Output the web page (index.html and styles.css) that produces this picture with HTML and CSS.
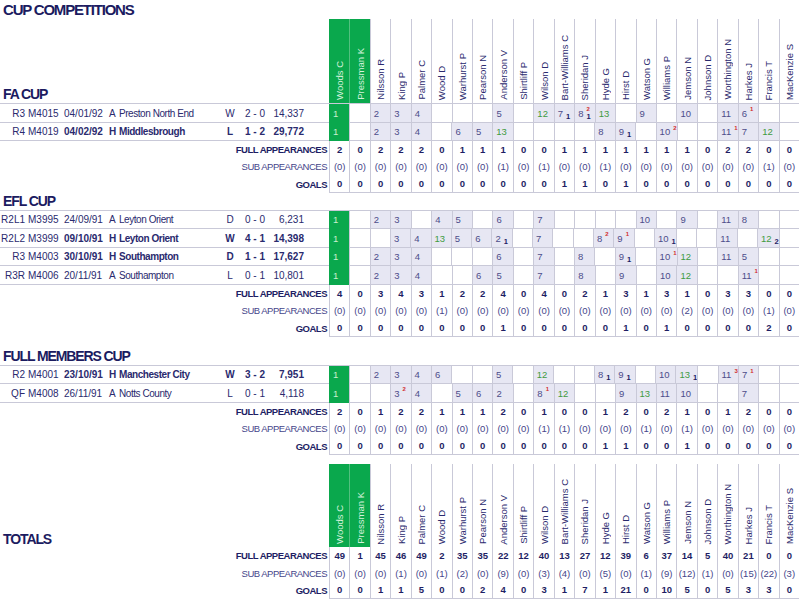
FILE: index.html
```html
<!DOCTYPE html>
<html lang="en">
<head>
<meta charset="utf-8">
<title>Cup Competitions</title>
<link rel="stylesheet" href="styles.css">
</head>
<body>
<main class="page">
  <h1 class="page-title">CUP COMPETITIONS</h1>

  <section class="comp">
    <div class="grid head">
      <h2 class="comp-title">FA CUP</h2>
      <div class="name gk"><span>Woods C</span></div>
      <div class="name gk"><span>Pressman K</span></div>
      <div class="name"><span>Nilsson R</span></div>
      <div class="name"><span>King P</span></div>
      <div class="name"><span>Palmer C</span></div>
      <div class="name"><span>Wood D</span></div>
      <div class="name"><span>Warhurst P</span></div>
      <div class="name"><span>Pearson N</span></div>
      <div class="name"><span>Anderson V</span></div>
      <div class="name"><span>Shirtliff P</span></div>
      <div class="name"><span>Wilson D</span></div>
      <div class="name"><span>Bart-Williams C</span></div>
      <div class="name"><span>Sheridan J</span></div>
      <div class="name"><span>Hyde G</span></div>
      <div class="name"><span>Hirst D</span></div>
      <div class="name"><span>Watson G</span></div>
      <div class="name"><span>Williams P</span></div>
      <div class="name"><span>Jemson N</span></div>
      <div class="name"><span>Johnson D</span></div>
      <div class="name"><span>Worthington N</span></div>
      <div class="name"><span>Harkes J</span></div>
      <div class="name"><span>Francis T</span></div>
      <div class="name"><span>MacKenzie S</span></div>
    </div>
    <div class="matches">
      <div class="grid match">
        <div class="info"><span class="rd">R3</span><span class="code">M4015</span><span class="date">04/01/92</span><span class="ven">A</span><span class="opp">Preston North End</span><span class="res">W</span><span class="score">2 - 0</span><span class="att">14,337</span></div>
        <span class="p gk">1</span><span class="p"></span><span class="p f">2</span><span class="p f">3</span><span class="p f">4</span><span class="p"></span><span class="p"></span><span class="p"></span><span class="p f">5</span><span class="p"></span><span class="p f s">12</span><span class="p f">7<span class="mk"><b class="dn">1</b></span></span><span class="p f">8<span class="mk"><b class="up">2</b><b class="dn">1</b></span></span><span class="p f s">13</span><span class="p"></span><span class="p f">9</span><span class="p"></span><span class="p f">10</span><span class="p"></span><span class="p f">11</span><span class="p f">6<span class="mk"><b class="up">1</b></span></span><span class="p"></span><span class="p"></span>
      </div>
      <div class="grid match home">
        <div class="info"><span class="rd">R4</span><span class="code">M4019</span><span class="date">04/02/92</span><span class="ven">H</span><span class="opp">Middlesbrough</span><span class="res">L</span><span class="score">1 - 2</span><span class="att">29,772</span></div>
        <span class="p gk">1</span><span class="p"></span><span class="p f">2</span><span class="p f">3</span><span class="p f">4</span><span class="p"></span><span class="p f">6</span><span class="p f">5</span><span class="p f s">13</span><span class="p"></span><span class="p"></span><span class="p"></span><span class="p"></span><span class="p f">8</span><span class="p f">9<span class="mk"><b class="dn">1</b></span></span><span class="p"></span><span class="p f">10<span class="mk"><b class="up">2</b></span></span><span class="p"></span><span class="p"></span><span class="p f">11<span class="mk"><b class="up">1</b></span></span><span class="p f">7</span><span class="p f s">12</span><span class="p"></span>
      </div>
    </div>
    <div class="grid sum sum-full"><span class="lbl">FULL APPEARANCES</span><span>2</span><span>0</span><span>2</span><span>2</span><span>2</span><span>0</span><span>1</span><span>1</span><span>1</span><span>0</span><span>0</span><span>1</span><span>1</span><span>1</span><span>1</span><span>1</span><span>1</span><span>1</span><span>0</span><span>2</span><span>2</span><span>0</span><span>0</span></div>
    <div class="grid sum sum-sub"><span class="lbl">SUB APPEARANCES</span><span>(0)</span><span>(0)</span><span>(0)</span><span>(0)</span><span>(0)</span><span>(0)</span><span>(0)</span><span>(0)</span><span>(1)</span><span>(0)</span><span>(1)</span><span>(0)</span><span>(0)</span><span>(1)</span><span>(0)</span><span>(0)</span><span>(0)</span><span>(0)</span><span>(0)</span><span>(0)</span><span>(0)</span><span>(1)</span><span>(0)</span></div>
    <div class="grid sum sum-goals"><span class="lbl">GOALS</span><span>0</span><span>0</span><span>0</span><span>0</span><span>0</span><span>0</span><span>0</span><span>0</span><span>0</span><span>0</span><span>0</span><span>1</span><span>1</span><span>0</span><span>1</span><span>0</span><span>0</span><span>0</span><span>0</span><span>0</span><span>0</span><span>0</span><span>0</span></div>
  </section>

  <section class="comp">
    <h2 class="comp-title solo">EFL CUP</h2>
    <div class="matches">
      <div class="grid match">
        <div class="info"><span class="rd">R2L1</span><span class="code">M3995</span><span class="date">24/09/91</span><span class="ven">A</span><span class="opp">Leyton Orient</span><span class="res">D</span><span class="score">0 - 0</span><span class="att">6,231</span></div>
        <span class="p gk">1</span><span class="p"></span><span class="p f">2</span><span class="p f">3</span><span class="p"></span><span class="p f">4</span><span class="p f">5</span><span class="p"></span><span class="p f">6</span><span class="p"></span><span class="p f">7</span><span class="p"></span><span class="p"></span><span class="p"></span><span class="p"></span><span class="p f">10</span><span class="p"></span><span class="p f">9</span><span class="p"></span><span class="p f">11</span><span class="p f">8</span><span class="p"></span><span class="p"></span>
      </div>
      <div class="grid match home">
        <div class="info"><span class="rd">R2L2</span><span class="code">M3999</span><span class="date">09/10/91</span><span class="ven">H</span><span class="opp">Leyton Orient</span><span class="res">W</span><span class="score">4 - 1</span><span class="att">14,398</span></div>
        <span class="p gk">1</span><span class="p"></span><span class="p"></span><span class="p f">3</span><span class="p f">4</span><span class="p f s">13</span><span class="p f">5</span><span class="p f">6</span><span class="p f">2<span class="mk"><b class="dn">1</b></span></span><span class="p"></span><span class="p f">7</span><span class="p"></span><span class="p"></span><span class="p f">8<span class="mk"><b class="up">2</b></span></span><span class="p f">9<span class="mk"><b class="up">1</b></span></span><span class="p"></span><span class="p f">10<span class="mk"><b class="dn">1</b></span></span><span class="p"></span><span class="p"></span><span class="p f">11</span><span class="p"></span><span class="p f s">12<span class="mk"><b class="dn">2</b></span></span><span class="p"></span>
      </div>
      <div class="grid match home">
        <div class="info"><span class="rd">R3</span><span class="code">M4003</span><span class="date">30/10/91</span><span class="ven">H</span><span class="opp">Southampton</span><span class="res">D</span><span class="score">1 - 1</span><span class="att">17,627</span></div>
        <span class="p gk">1</span><span class="p"></span><span class="p f">2</span><span class="p f">3</span><span class="p f">4</span><span class="p"></span><span class="p"></span><span class="p"></span><span class="p f">6</span><span class="p"></span><span class="p f">7</span><span class="p"></span><span class="p f">8</span><span class="p"></span><span class="p f">9<span class="mk"><b class="dn">1</b></span></span><span class="p"></span><span class="p f">10<span class="mk"><b class="up">1</b></span></span><span class="p f s">12</span><span class="p"></span><span class="p f">11</span><span class="p f">5</span><span class="p"></span><span class="p"></span>
      </div>
      <div class="grid match">
        <div class="info"><span class="rd">R3R</span><span class="code">M4006</span><span class="date">20/11/91</span><span class="ven">A</span><span class="opp">Southampton</span><span class="res">L</span><span class="score">0 - 1</span><span class="att">10,801</span></div>
        <span class="p gk">1</span><span class="p"></span><span class="p f">2</span><span class="p f">3</span><span class="p f">4</span><span class="p"></span><span class="p"></span><span class="p f">6</span><span class="p f">5</span><span class="p"></span><span class="p f">7</span><span class="p"></span><span class="p f">8</span><span class="p"></span><span class="p f">9</span><span class="p"></span><span class="p f">10</span><span class="p f s">12</span><span class="p"></span><span class="p"></span><span class="p f">11<span class="mk"><b class="up">1</b></span></span><span class="p"></span><span class="p"></span>
      </div>
    </div>
    <div class="grid sum sum-full"><span class="lbl">FULL APPEARANCES</span><span>4</span><span>0</span><span>3</span><span>4</span><span>3</span><span>1</span><span>2</span><span>2</span><span>4</span><span>0</span><span>4</span><span>0</span><span>2</span><span>1</span><span>3</span><span>1</span><span>3</span><span>1</span><span>0</span><span>3</span><span>3</span><span>0</span><span>0</span></div>
    <div class="grid sum sum-sub"><span class="lbl">SUB APPEARANCES</span><span>(0)</span><span>(0)</span><span>(0)</span><span>(0)</span><span>(0)</span><span>(1)</span><span>(0)</span><span>(0)</span><span>(0)</span><span>(0)</span><span>(0)</span><span>(0)</span><span>(0)</span><span>(0)</span><span>(0)</span><span>(0)</span><span>(0)</span><span>(2)</span><span>(0)</span><span>(0)</span><span>(0)</span><span>(1)</span><span>(0)</span></div>
    <div class="grid sum sum-goals"><span class="lbl">GOALS</span><span>0</span><span>0</span><span>0</span><span>0</span><span>0</span><span>0</span><span>0</span><span>0</span><span>1</span><span>0</span><span>0</span><span>0</span><span>0</span><span>0</span><span>1</span><span>0</span><span>1</span><span>0</span><span>0</span><span>0</span><span>0</span><span>2</span><span>0</span></div>
  </section>

  <section class="comp comp-gap">
    <h2 class="comp-title solo">FULL MEMBERS CUP</h2>
    <div class="matches">
      <div class="grid match home">
        <div class="info"><span class="rd">R2</span><span class="code">M4001</span><span class="date">23/10/91</span><span class="ven">H</span><span class="opp">Manchester City</span><span class="res">W</span><span class="score">3 - 2</span><span class="att">7,951</span></div>
        <span class="p gk">1</span><span class="p"></span><span class="p f">2</span><span class="p f">3</span><span class="p f">4</span><span class="p f">6</span><span class="p"></span><span class="p"></span><span class="p f">5</span><span class="p"></span><span class="p f s">12</span><span class="p"></span><span class="p"></span><span class="p f">8<span class="mk"><b class="dn">1</b></span></span><span class="p f">9<span class="mk"><b class="dn">1</b></span></span><span class="p"></span><span class="p f">10</span><span class="p f s">13<span class="mk"><b class="dn">1</b></span></span><span class="p"></span><span class="p f">11<span class="mk"><b class="up">3</b></span></span><span class="p f">7<span class="mk"><b class="up">1</b></span></span><span class="p"></span><span class="p"></span>
      </div>
      <div class="grid match">
        <div class="info"><span class="rd">QF</span><span class="code">M4008</span><span class="date">26/11/91</span><span class="ven">A</span><span class="opp">Notts County</span><span class="res">L</span><span class="score">0 - 1</span><span class="att">4,118</span></div>
        <span class="p gk">1</span><span class="p"></span><span class="p"></span><span class="p f">3<span class="mk"><b class="up">2</b></span></span><span class="p f">4</span><span class="p"></span><span class="p f">5</span><span class="p f">6</span><span class="p f">2</span><span class="p"></span><span class="p f">8<span class="mk"><b class="up">1</b></span></span><span class="p f s">12</span><span class="p"></span><span class="p"></span><span class="p f">9</span><span class="p f s">13</span><span class="p f">11</span><span class="p f">10</span><span class="p"></span><span class="p"></span><span class="p f">7</span><span class="p"></span><span class="p"></span>
      </div>
    </div>
    <div class="grid sum sum-full"><span class="lbl">FULL APPEARANCES</span><span>2</span><span>0</span><span>1</span><span>2</span><span>2</span><span>1</span><span>1</span><span>1</span><span>2</span><span>0</span><span>1</span><span>0</span><span>0</span><span>1</span><span>2</span><span>0</span><span>2</span><span>1</span><span>0</span><span>1</span><span>2</span><span>0</span><span>0</span></div>
    <div class="grid sum sum-sub"><span class="lbl">SUB APPEARANCES</span><span>(0)</span><span>(0)</span><span>(0)</span><span>(0)</span><span>(0)</span><span>(0)</span><span>(0)</span><span>(0)</span><span>(0)</span><span>(0)</span><span>(1)</span><span>(1)</span><span>(0)</span><span>(0)</span><span>(0)</span><span>(1)</span><span>(0)</span><span>(1)</span><span>(0)</span><span>(0)</span><span>(0)</span><span>(0)</span><span>(0)</span></div>
    <div class="grid sum sum-goals"><span class="lbl">GOALS</span><span>0</span><span>0</span><span>0</span><span>0</span><span>0</span><span>0</span><span>0</span><span>0</span><span>0</span><span>0</span><span>0</span><span>0</span><span>0</span><span>1</span><span>1</span><span>0</span><span>0</span><span>1</span><span>0</span><span>0</span><span>0</span><span>0</span><span>0</span></div>
  </section>

  <section class="comp comp-totals">
    <div class="grid head head-totals">
      <h2 class="comp-title">TOTALS</h2>
      <div class="name gk"><span>Woods C</span></div>
      <div class="name gk"><span>Pressman K</span></div>
      <div class="name"><span>Nilsson R</span></div>
      <div class="name"><span>King P</span></div>
      <div class="name"><span>Palmer C</span></div>
      <div class="name"><span>Wood D</span></div>
      <div class="name"><span>Warhurst P</span></div>
      <div class="name"><span>Pearson N</span></div>
      <div class="name"><span>Anderson V</span></div>
      <div class="name"><span>Shirtliff P</span></div>
      <div class="name"><span>Wilson D</span></div>
      <div class="name"><span>Bart-Williams C</span></div>
      <div class="name"><span>Sheridan J</span></div>
      <div class="name"><span>Hyde G</span></div>
      <div class="name"><span>Hirst D</span></div>
      <div class="name"><span>Watson G</span></div>
      <div class="name"><span>Williams P</span></div>
      <div class="name"><span>Jemson N</span></div>
      <div class="name"><span>Johnson D</span></div>
      <div class="name"><span>Worthington N</span></div>
      <div class="name"><span>Harkes J</span></div>
      <div class="name"><span>Francis T</span></div>
      <div class="name"><span>MacKenzie S</span></div>
    </div>
    <div class="grid sum sum-full"><span class="lbl">FULL APPEARANCES</span><span>49</span><span>1</span><span>45</span><span>46</span><span>49</span><span>2</span><span>35</span><span>35</span><span>22</span><span>12</span><span>40</span><span>13</span><span>27</span><span>12</span><span>39</span><span>6</span><span>37</span><span>14</span><span>5</span><span>40</span><span>21</span><span>0</span><span>0</span></div>
    <div class="grid sum sum-sub"><span class="lbl">SUB APPEARANCES</span><span>(0)</span><span>(0)</span><span>(0)</span><span>(1)</span><span>(0)</span><span>(1)</span><span>(2)</span><span>(0)</span><span>(9)</span><span>(0)</span><span>(3)</span><span>(4)</span><span>(0)</span><span>(5)</span><span>(0)</span><span>(1)</span><span>(9)</span><span>(12)</span><span>(1)</span><span>(0)</span><span>(15)</span><span>(22)</span><span>(3)</span></div>
    <div class="grid sum sum-goals"><span class="lbl">GOALS</span><span>0</span><span>0</span><span>1</span><span>1</span><span>5</span><span>0</span><span>0</span><span>2</span><span>4</span><span>0</span><span>3</span><span>1</span><span>7</span><span>1</span><span>21</span><span>0</span><span>10</span><span>5</span><span>0</span><span>5</span><span>3</span><span>3</span><span>0</span></div>
  </section>
</main>
</body>
</html>
```

FILE: styles.css
```css
:root {
  --navy: #1e1e64;
  --ink: #2a2a6e;
  --muted: #4d4d8a;
  --line: #c9c9d8;
  --lav: #e7e7f3;
  --green: #0aa84d;
}

* { box-sizing: border-box; }

body {
  margin: 0;
  background: #fff;
  color: var(--navy);
  font-family: "Liberation Sans", Arial, sans-serif;
}

.page { width: 799px; }

.page-title,
.comp-title {
  margin: 0;
  padding-left: 3px;
  font-size: 14px;
  font-weight: 700;
  letter-spacing: -1.1px;
  color: #1b1b60;
  white-space: nowrap;
}

.page-title {
  height: 19px;
  line-height: 20px;
  font-size: 15px;
  letter-spacing: -1.2px;
}

.comp-title { align-self: end; line-height: 17px; }
.comp-title.solo { height: 17px; }
.comp-gap { margin-top: 11px; }
.comp-totals { margin-top: 9.5px; }
.head-totals .comp-title { line-height: 15px; }

.grid {
  display: grid;
  grid-template-columns: 329px repeat(23, 1fr);
}

/* header with rotated player names */
.head { height: 84px; }
.head-totals { height: 83px; }

.name {
  display: flex;
  align-items: flex-end;
  justify-content: center;
  padding-bottom: 3px;
  border-left: 1px solid var(--line);
}
.name span {
  writing-mode: vertical-rl;
  transform: rotate(180deg);
  white-space: nowrap;
  font-size: 9.5px;
  line-height: 11px;
  color: var(--ink);
}
.name.gk { background: var(--green); border-left-color: var(--green); }
.name.gk + .name.gk { border-left-color: #52c07f; }
.name.gk span { color: #d4f2dc; }

/* match rows */
.matches { border-top: 1px solid var(--line); }

.match { height: 18.5px; }
.match > * { border-bottom: 1px solid var(--line); }

.info {
  display: grid;
  grid-template-columns: 25px 39px 44px 10px 102px 20px 30px 34px 1fr;
  align-items: center;
  font-size: 10px;
  color: var(--ink);
  white-space: nowrap;
}
.rd { text-align: right; }
.code { padding-left: 3px; }
.ven { padding-left: 1px; }
.opp { padding-left: 1px; letter-spacing: -0.45px; }
.res, .score { text-align: center; }
.att { text-align: right; }

.home .date,
.home .ven,
.home .opp,
.home .res,
.home .score,
.home .att { font-weight: 700; }

.p {
  display: flex;
  align-items: center;
  padding-left: 3px;
  border-left: 1px solid var(--line);
  font-size: 9.5px;
  color: var(--muted);
}
.p.f { background: var(--lav); }
.p.s { color: #3f9b3f; }
.p.gk {
  background: var(--green);
  border-left-color: var(--green);
  border-bottom-color: var(--green);
  color: #c9efcf;
}

.mk {
  align-self: stretch;
  display: flex;
  flex-direction: column;
  margin-left: 3px;
  padding: 2px 0 1px;
}
.up {
  color: #d22c2c;
  font-size: 6px;
  line-height: 7px;
  font-weight: 700;
}
.dn {
  margin-top: auto;
  color: var(--navy);
  font-size: 7.5px;
  line-height: 8px;
  font-weight: 700;
}

/* summary rows */
.sum {
  height: 17.3px;
  font-size: 9.5px;
}
.sum > span {
  display: flex;
  align-items: center;
  justify-content: center;
  border-left: 1px solid var(--line);
  white-space: nowrap;
}
.sum > .lbl {
  justify-content: flex-end;
  padding-right: 2px;
  border-left: 0;
  letter-spacing: -0.5px;
}
.sum-full, .sum-goals { font-weight: 700; color: var(--navy); }
.sum-sub { color: #45458a; }
.sum-goals > span:not(.lbl) { border-bottom: 1px solid var(--line); }
```
